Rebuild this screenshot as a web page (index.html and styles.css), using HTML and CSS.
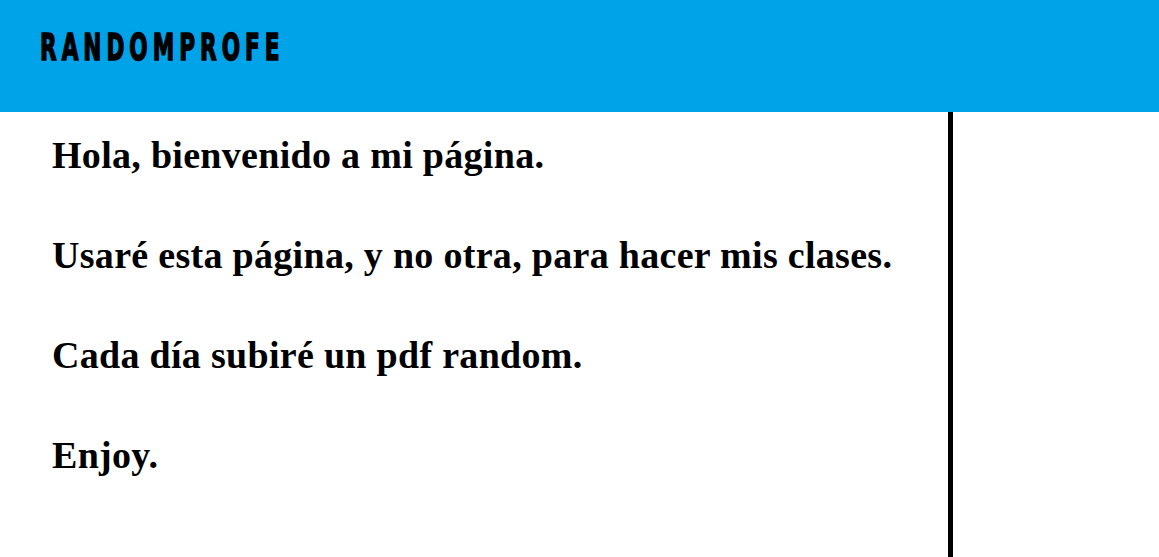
FILE: index.html
```html
<!DOCTYPE html>
<html lang="es">
<head>
<meta charset="utf-8">
<title>RandomProfe</title>
<link rel="stylesheet" href="styles.css">
</head>
<body>
<header class="site-header">
  <h1 class="brand">RANDOMPROFE</h1>
</header>
<div class="layout">
  <main class="content">
    <p>Hola, bienvenido a mi página.</p>
    <p>Usaré esta página, y no otra, para hacer mis clases.</p>
    <p>Cada día subiré un pdf random.</p>
    <p>Enjoy.</p>
  </main>
  <aside class="sidebar"></aside>
</div>
</body>
</html>
```
FILE: styles.css
```css
html, body {
  margin: 0;
  padding: 0;
  background: #ffffff;
  height: 100%;
}

body {
  display: flex;
  flex-direction: column;
  overflow: hidden;
}

.site-header {
  height: 112px;
  flex: 0 0 112px;
  background: #00a2e8;
  display: flex;
  align-items: flex-start;
  padding: 0 0 0 40px;
  box-sizing: border-box;
}

.brand {
  margin: 26px 0 0 0;
  font-family: "DejaVu Sans Condensed", "DejaVu Sans", sans-serif;
  font-stretch: condensed;
  font-weight: 900;
  font-size: 24px;
  line-height: 28px;
  letter-spacing: 5px;
  color: #000;
  -webkit-text-stroke: 1px #000;
  transform: scaleY(1.55);
  transform-origin: top left;
}

.layout {
  flex: 1;
  display: flex;
}

.content {
  box-sizing: border-box;
  width: 953px;
  flex: 0 0 953px;
  border-right: 5px solid #000;
  padding: 21px 0 0 52px;
  display: flex;
  flex-direction: column;
  gap: 56px;
}

.content p {
  margin: 0;
  font-family: "Liberation Serif", "Times New Roman", serif;
  font-weight: bold;
  font-size: 38px;
  line-height: 44px;
  letter-spacing: 0.3px;
  color: #000;
}

.sidebar {
  flex: 1;
}
```
